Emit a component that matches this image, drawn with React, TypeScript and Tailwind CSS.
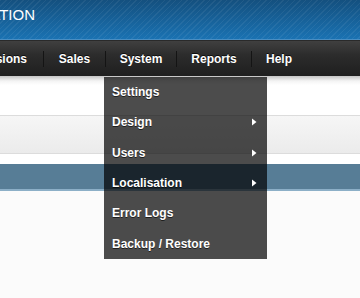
import React from "react";

const Arrow = () => (
  <svg width="5" height="8" viewBox="0 0 5 8" className="block">
    <polygon points="0,0.5 4.5,4 0,7.5" fill="#ffffff" />
  </svg>
);

const Sep = () => <div className="w-px h-[16px] bg-[#141414] shrink-0" />;

export default function App() {
  const items: { label: string; sub?: boolean }[] = [
    { label: "Settings" },
    { label: "Design", sub: true },
    { label: "Users", sub: true },
    { label: "Localisation", sub: true },
    { label: "Error Logs" },
    { label: "Backup / Restore" },
  ];
  return (
    <div className="relative w-[360px] h-[298px] overflow-hidden bg-[#fbfbfb] font-['Liberation_Sans',Arial,sans-serif]">
      {/* header */}
      <div className="h-[40px] bg-[repeating-linear-gradient(135deg,rgba(255,255,255,0.06)_0px,rgba(255,255,255,0.06)_1px,transparent_1px,transparent_4px),linear-gradient(to_bottom,#14507f,#1a72b2)] border-b border-[#4a8ec2] flex items-start">
        <div className="w-[35px] mt-[6px] overflow-hidden flex justify-end whitespace-nowrap text-[15px] leading-[18px] text-white">
          ADMINISTRATION
        </div>
      </div>
      {/* nav */}
      <div className="h-[36px] bg-[linear-gradient(to_bottom,#404040,#2c2c2c_40%,#1f1f1f)] border-t border-[#2a2a2a] flex items-center text-white text-[12px] font-bold [text-shadow:0_-1px_0_rgba(0,0,0,0.7)]">
        <div className="w-[43px] pr-[16px] overflow-hidden flex justify-end whitespace-nowrap">Extensions</div>
        <Sep />
        <div className="w-[61px] text-center">Sales</div>
        <Sep />
        <div className="w-[70px] text-center">System</div>
        <Sep />
        <div className="w-[74px] text-center">Reports</div>
        <Sep />
        <div className="w-[54px] text-center">Help</div>
      </div>
      {/* content */}
      <div className="h-[40px] bg-[linear-gradient(to_bottom,#c4c4c4,#f4f4f4_5px,#ffffff_9px)] border-b border-[#dcdcdc]" />
      <div className="h-[38px] bg-[linear-gradient(to_bottom,#f6f6f6,#ebebeb)] border-b border-[#dcdcdc]" />
      <div className="h-[10px] bg-white" />
      <div className="h-[27px] bg-[#577d96] border-b-2 border-[#8cafc7]" />
      {/* dropdown */}
      <div className="absolute left-[104px] top-[77px] w-[163px] h-[182px] bg-[rgba(0,0,0,0.7)] text-white text-[12px] font-bold [text-shadow:0_1px_0_rgba(0,0,0,0.6)]">
        {items.map((it) => (
          <div key={it.label} className="h-[30.3px] pl-[8px] pr-[10px] flex items-center justify-between">
            <span>{it.label}</span>
            {it.sub ? <Arrow /> : null}
          </div>
        ))}
      </div>
    </div>
  );
}
